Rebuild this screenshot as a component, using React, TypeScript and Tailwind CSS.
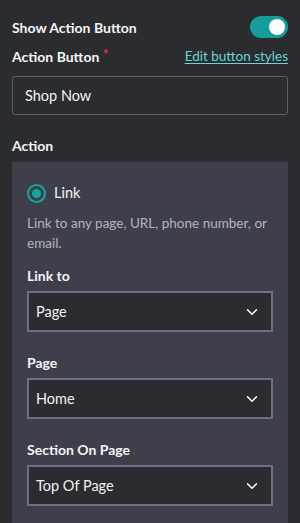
import { ChevronDown } from 'lucide-react';

const font = { fontFamily: 'Lato, "Open Sans", sans-serif' };

function SelectBox({ value }: { value: string }) {
  return (
    <div className="flex h-[41px] items-center justify-between border-2 border-[#6b7085] bg-[#2b2b30] pl-[7px] pr-[10px]">
      <span className="text-[14.5px] text-[#f2f2f4]">{value}</span>
      <ChevronDown className="h-[18px] w-[18px] text-white" strokeWidth={2} />
    </div>
  );
}

function Field({ label, value, className = '' }: { label: string; value: string; className?: string }) {
  return (
    <div className={className}>
      <p className="mb-[6px] text-[14px] font-bold leading-[18px] text-[#f4f4f6]">{label}</p>
      <SelectBox value={value} />
    </div>
  );
}

export default function App() {
  return (
    <div className="h-[523px] w-[300px] overflow-hidden bg-[#2b2c30] px-[12px] pt-[16px]" style={font}>
      {/* Toggle row */}
      <div className="flex h-[22px] items-center justify-between">
        <span className="text-[14px] font-bold text-[#f4f4f6]">Show Action Button</span>
        <div className="flex h-[22px] w-[38px] items-center justify-end rounded-full bg-[#149d9a] pr-[3px]">
          <div className="h-[16px] w-[16px] rounded-full bg-white" />
        </div>
      </div>

      {/* Action button text */}
      <div className="mt-[9px] flex h-[18px] items-center justify-between">
        <span className="text-[14px] font-bold text-[#f4f4f6]">
          Action Button <span className="relative -top-[3px] text-[14px] text-[#e0393e]">*</span>
        </span>
        <a className="text-[13.5px] text-[#6ad4d9] underline underline-offset-2">Edit button styles</a>
      </div>
      <div className="mt-[11px] flex h-[39px] items-center rounded-[3px] border border-[#5d606c] px-[12px]">
        <span className="text-[14.5px] text-[#f2f2f4]">Shop Now</span>
      </div>

      {/* Action */}
      <p className="mt-[22px] h-[18px] text-[14px] font-bold leading-[18px] text-[#f4f4f6]">Action</p>
      <div className="mt-[7px] h-[400px] bg-[#3e3f4a] px-[15px] pt-[22px]">
        <div className="flex h-[18px] items-center gap-[8px]">
          <div className="flex h-[19px] w-[19px] items-center justify-center rounded-full border-2 border-[#17a5a2]">
            <div className="h-[9px] w-[9px] rounded-full bg-[#17a5a2]" />
          </div>
          <span className="text-[14.5px] text-[#f4f4f6]">Link</span>
        </div>
        <p className="mt-[11px] text-[13.5px] leading-[20px] text-[#b3b4bc]">
          Link to any page, URL, phone number, or email.
        </p>
        <Field label="Link to" value="Page" className="mt-[14px]" />
        <Field label="Page" value="Home" className="mt-[22px]" />
        <Field label="Section On Page" value="Top Of Page" className="mt-[22px]" />
      </div>
    </div>
  );
}
